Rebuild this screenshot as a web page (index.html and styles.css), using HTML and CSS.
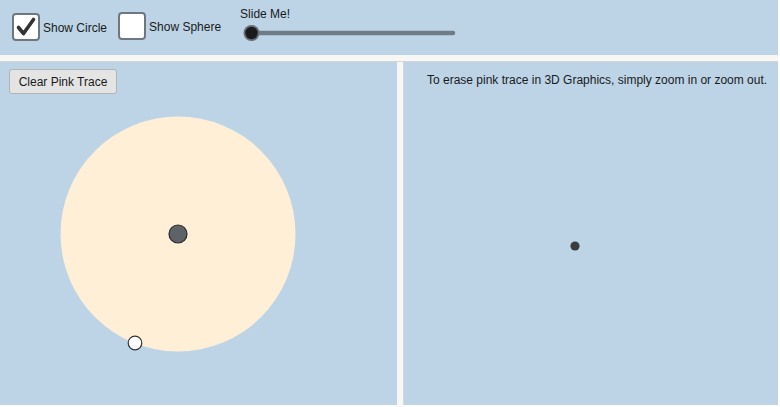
FILE: index.html
```html
<!DOCTYPE html>
<html>
<head>
<meta charset="utf-8">
<link rel="stylesheet" href="styles.css">
</head>
<body>
<div class="app">
  <div class="toolbar">
    <label class="check">
      <span class="box">
        <svg width="24" height="24" viewBox="0 0 24 24"><path d="M4.5 12.5 L9.5 18.5 L19.5 4.5" fill="none" stroke="#333" stroke-width="3.6" stroke-linecap="round" stroke-linejoin="round"/></svg>
      </span>
      <span class="lbl">Show Circle</span>
    </label>
    <label class="check check2">
      <span class="box"></span>
      <span class="lbl">Show Sphere</span>
    </label>
    <div class="slider">
      <div class="slabel">Slide Me!</div>
      <svg class="strack" width="220" height="22" viewBox="0 0 220 22">
        <line x1="10" y1="11" x2="213" y2="11" stroke="#6f7c87" stroke-width="4.5" stroke-linecap="round"/>
        <circle cx="11.5" cy="11" r="8" fill="#6a6f75"/>
        <circle cx="11.5" cy="11" r="6.2" fill="#1b1b1b"/>
      </svg>
    </div>
  </div>
  <div class="hsep"></div>
  <div class="main">
    <div class="panel left">
      <svg class="canvas" width="397" height="343" viewBox="0 0 397 343">
        <circle cx="178" cy="172" r="117.5" fill="#ffefd7"/>
        <circle cx="178" cy="172" r="9" fill="#5e6367" stroke="#2a2a2a" stroke-width="1.2"/>
        <circle cx="135" cy="281" r="6.8" fill="#ffffff" stroke="#333" stroke-width="1.2"/>
      </svg>
      <button class="btn">Clear Pink Trace</button>
    </div>
    <div class="vsep"></div>
    <div class="panel right">
      <p class="note">To erase pink trace in 3D Graphics, simply zoom in or zoom out.</p>
      <svg class="canvas3d" width="374" height="343" viewBox="0 0 374 343">
        <circle cx="171" cy="184" r="4.6" fill="#3a3c3f"/>
      </svg>
    </div>
  </div>
</div>
</body>
</html>
```

FILE: styles.css
```css
html, body {
  margin: 0;
  padding: 0;
  background: #ffffff;
}
body {
  font-family: "Liberation Sans", Arial, sans-serif;
  color: #1a1a1a;
}
.app {
  width: 778px;
  height: 405px;
  display: flex;
  flex-direction: column;
  background: #bdd4e7;
}
.toolbar {
  height: 55px;
  display: flex;
  align-items: flex-start;
  padding-left: 12px;
  box-sizing: border-box;
}
.check {
  display: flex;
  align-items: center;
  gap: 3px;
  margin-top: 13px;
  font-size: 12px;
}
.check2 {
  margin-left: 11px;
  margin-top: 12px;
}
.box {
  width: 24px;
  height: 24px;
  border: 2px solid #6e7780;
  border-radius: 4px;
  background: #ffffff;
  display: flex;
  align-items: center;
  justify-content: center;
}
.lbl {
  line-height: 14px;
  padding-top: 2px;
}
.slider {
  margin-left: 19px;
  padding-top: 7px;
  display: flex;
  flex-direction: column;
}
.slabel {
  font-size: 12px;
  line-height: 14px;
}
.strack {
  display: block;
  margin-top: 1px;
  margin-left: 0;
}
.hsep {
  height: 6px;
  background: #f7f7f6;
  border-bottom: 1px solid #d5d5d3;
}
.main {
  flex: 1;
  display: flex;
  min-height: 0;
}
.panel {
  position: relative;
  overflow: hidden;
}
.left {
  width: 397px;
}
.vsep {
  width: 6px;
  background: #f7f7f6;
  border-right: 1px solid #d5d5d3;
}
.right {
  flex: 1;
}
.canvas, .canvas3d {
  display: block;
}
.btn {
  position: absolute;
  left: 9px;
  top: 7px;
  width: 108px;
  height: 25px;
  font-family: "Liberation Sans", Arial, sans-serif;
  font-size: 12px;
  color: #1a1a1a;
  background: #e4e4e4;
  border: 1px solid #b3b3b3;
  border-radius: 3px;
  padding: 0;
}
.note {
  position: absolute;
  left: 23px;
  top: 11px;
  margin: 0;
  font-size: 12px;
  line-height: 14px;
  color: #1a1a1a;
  white-space: nowrap;
}
```
